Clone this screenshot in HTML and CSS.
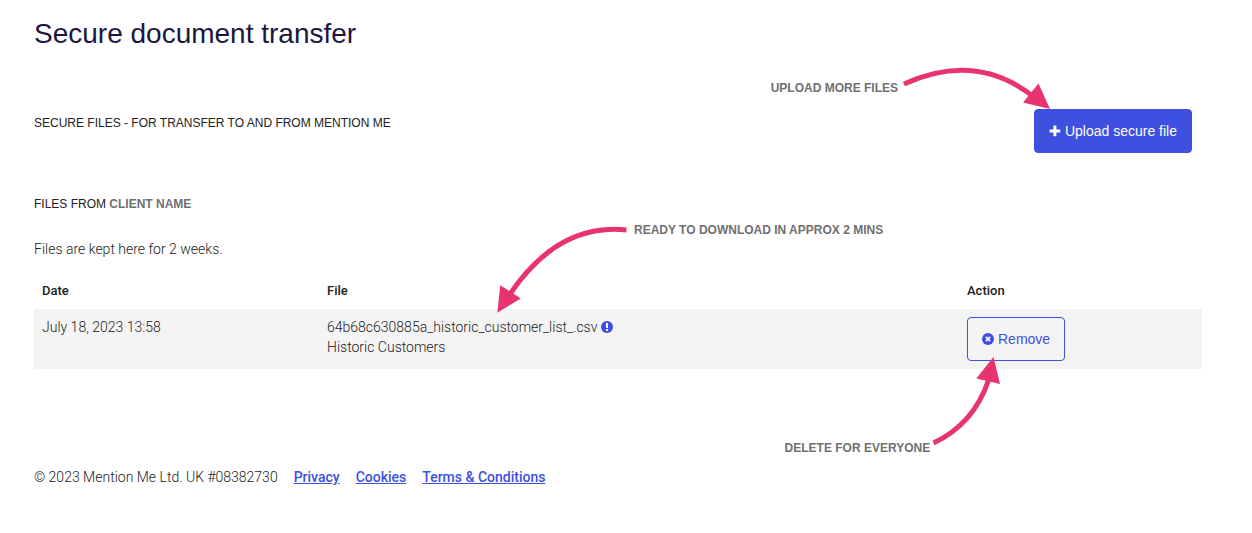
FILE: index.html
```
<!DOCTYPE html>
<html lang="en">
<head>
  <meta charset="UTF-8" />
  <meta name="viewport" content="width=device-width, initial-scale=1.0">
  <title>Secure document transfer</title>
  <link rel="stylesheet" href="styles.css">
</head>
<body>
  <main class="page">
    <h1>Secure document transfer</h1>

    <div class="toolbar">
      <h2>Secure files - for transfer to and from Mention Me</h2>
      <div class="anchor">
        <button type="button" class="btn btn-primary">
          <svg class="icon" width="12" height="12" viewBox="0 0 12 12" fill="currentColor">
            <path d="M4.4 .6h3v3.8h3.8v3H7.4v3.8h-3V7.4H.6v-3h3.8z"/>
          </svg>
          Upload secure file
        </button>
        <div class="callout callout-upload">
          <span>Upload more files</span>
          <svg width="148" height="42" viewBox="902 67 148 42">
            <path class="line" d="M904 84 Q976 51 1034 97"/>
            <path class="head" d="M1050 109 L1038.5 83.5 L1023 102.5 Z"/>
          </svg>
        </div>
      </div>
    </div>

    <h2>Files from <strong>Client name</strong></h2>
    <p class="note">Files are kept here for 2 weeks.</p>

    <table class="files">
      <thead>
        <tr>
          <th class="col-date">Date</th>
          <th class="col-file">File</th>
          <th class="col-action">Action</th>
        </tr>
      </thead>
      <tbody>
        <tr>
          <td>July 18, 2023 13:58</td>
          <td class="anchor">
            64b68c630885a_historic_customer_list_.csv
            <svg class="icon icon-info" width="12" height="12" viewBox="0 0 12 12">
              <circle cx="6" cy="6" r="6" fill="#3d50df"/>
              <path d="M4.9 2h2.2l-.2 5H5.1zM5 8h2v2H5z" fill="#fff"/>
            </svg>
            <br>
            Historic Customers
            <div class="callout callout-download">
              <svg width="132" height="89" viewBox="496 224 132 89">
                <path class="line" d="M626.5 230 Q558 223 510 294"/>
                <path class="head" d="M497.3 312.8 L500.3 285.3 L520.8 298.5 Z"/>
              </svg>
              <span>Ready to download in approx 2 mins</span>
            </div>
          </td>
          <td>
            <div class="anchor">
              <button type="button" class="btn btn-outline">
                <svg class="icon" width="12" height="12" viewBox="0 0 12 12">
                  <circle cx="6" cy="6" r="6" fill="currentColor"/>
                  <path d="M3.9 3.9l4.2 4.2M8.1 3.9L3.9 8.1" stroke="#f4f4f4" stroke-width="2"/>
                </svg>
                Remove
              </button>
              <div class="callout callout-remove">
                <span>Delete for everyone</span>
                <svg width="68" height="98" viewBox="932 356 68 98">
                  <path class="line" d="M933.5 443 Q974 424 988.5 380"/>
                  <path class="head" d="M993.5 357 L976.3 378.5 L1000 384 Z"/>
                </svg>
              </div>
            </div>
          </td>
        </tr>
      </tbody>
    </table>

    <footer>
      <span>© 2023 Mention Me Ltd. UK #08382730</span>
      <a href="#">Privacy</a>
      <a href="#">Cookies</a>
      <a href="#">Terms &amp; Conditions</a>
    </footer>
  </main>
</body>
</html>
```
FILE: styles.css
```
body {
  margin: 0;
  font-family: Roboto, sans-serif;
  font-size: 14px;
  font-weight: 300;
  line-height: 20px;
  color: #222;
  background-color: #fff;
}

.page {
  padding: 16px 50px 40px 34px;
}

h1 {
  margin: 0 0 57px;
  font-family: "Liberation Sans", Arial, sans-serif;
  font-size: 28px;
  font-weight: 400;
  line-height: 36px;
  color: #1c1640;
}

h2 {
  margin: 0;
  font-family: "Liberation Sans", Arial, sans-serif;
  font-size: 12px;
  font-weight: 400;
  line-height: 20px;
  text-transform: uppercase;
}

h2 strong {
  color: #707070;
}

.toolbar {
  display: flex;
  justify-content: space-between;
  align-items: flex-start;
  margin-bottom: 41px;
  padding-right: 10px;
}

.toolbar h2 {
  padding-top: 4px;
}

.anchor {
  position: relative;
}

div.anchor {
  width: fit-content;
}

.btn {
  display: flex;
  align-items: center;
  gap: 4px;
  height: 44px;
  padding: 0 14px;
  border: 1px solid #3d50df;
  border-radius: 4px;
  font-family: "Liberation Sans", Arial, sans-serif;
  font-size: 14px;
  white-space: nowrap;
  cursor: pointer;
}

.btn-primary {
  background-color: #3d50df;
  color: #fff;
}

.btn-outline {
  background-color: transparent;
  color: #3d50df;
}

.icon-info {
  vertical-align: -1px;
}

.note {
  margin: 25px 0 14px;
}

.files {
  width: 100%;
  table-layout: fixed;
  border-collapse: collapse;
}

.files th,
.files td {
  box-sizing: border-box;
  padding: 8px;
  text-align: left;
  vertical-align: top;
}

.files th {
  font-size: 13px;
  font-weight: 500;
}

.files tbody tr {
  background-color: #f4f4f4;
}

.col-date { width: 285px; }
.col-action { width: 243px; }

/* notes and arrows pointing at the controls */
.callout {
  position: absolute;
  display: flex;
  font-family: "Liberation Sans", Arial, sans-serif;
  font-size: 12px;
  font-weight: 700;
  line-height: 12px;
  color: #707070;
  text-transform: uppercase;
  white-space: nowrap;
  pointer-events: none;
}

.callout .line {
  fill: none;
  stroke: #e9336f;
  stroke-width: 5;
}

.callout .head {
  fill: #e9336f;
}

.callout-upload {
  right: 142px;
  bottom: 100%;
  align-items: center;
  gap: 4px;
}

.callout-download {
  top: -85px;
  left: 177px;
  align-items: flex-start;
  gap: 6px;
}

.callout-remove {
  top: 39px;
  right: 65px;
  align-items: flex-end;
  gap: 2px;
}

footer {
  display: flex;
  gap: 16px;
  margin-top: 98px;
}

footer a {
  color: #3d50df;
  font-weight: 500;
}
```
